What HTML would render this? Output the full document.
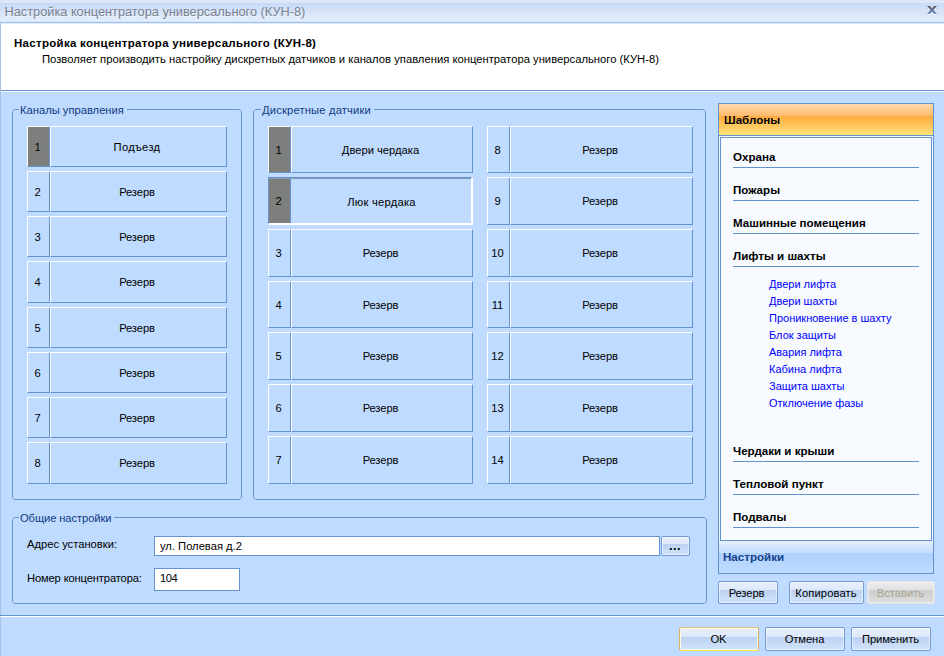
<!DOCTYPE html>
<html lang="ru"><head><meta charset="utf-8"><title>Настройка концентратора универсального (КУН-8)</title>
<style>
html,body{margin:0;padding:0}
body{width:944px;height:656px;overflow:hidden;background:#bfdbff;position:relative;font-family:"Liberation Sans",sans-serif;font-size:11.2px;color:#000;line-height:13px}
div,span{position:absolute;box-sizing:border-box;white-space:nowrap}
.tb{left:0;top:0;width:944px;height:24px;background:linear-gradient(#dde7f9 0,#dde7f9 3px,#c4d5f0 3px,#c9dbf7 4px,#e6edfb 21px,#c8e8fc 21px,#c8e8fc 22px,#a9c4ee 22px,#a9c4ee 23px,#dfe8f8 23px,#dfe8f8 24px)}
.tt{left:4.5px;top:4px;font-size:12.78px;line-height:15px;color:#76808e;text-shadow:0 1px 0 rgba(255,255,255,.6)}
.hd{left:1px;top:24px;width:943px;height:66px;background:#fff}
.hl{left:0;top:90px;width:944px;height:2px;background:linear-gradient(#6593cf 1px,#f4f8ff 1px)}
.lb{left:0;top:23px;width:1px;height:633px;background:#aebfe6}
.h1{left:14px;top:36px;font-weight:bold;font-size:11.5px;letter-spacing:.29px;line-height:14px}
.h2{left:42px;top:53px;font-size:11.25px}
.lg{color:#103a82;background:#bfdbff;padding:0 3px 0 1px;line-height:13px}
.c{padding-right:3px;border-top:1px solid #fff;border-left:1px solid #fff;border-right:1px solid #6593cf;border-bottom:1px solid #6593cf;text-align:center}
.c.g{background:#7d7f7c}
.r{letter-spacing:-.1px}
.w{letter-spacing:.3px}
.s{border-top:1px solid #6593cf;border-left:1px solid #6593cf;border-right:2px solid #fff;border-bottom:2px solid #fff;text-align:center}
.tx{background:#fff;border:1px solid #6593cf;padding-left:5px}
.btn{border:1px solid #7499d4;border-radius:2px;text-align:center;padding-right:1px;background:linear-gradient(#e9f0fc 0,#dde8fa 40%,#bcd1f1 40%,#d1e4fc 100%);box-shadow:inset 0 0 0 1px rgba(255,255,255,.5)}
.btn.def{border-color:#e3c17a #d9ad62 #ffe34d #d9ad62;box-shadow:inset 0 0 0 1px #fffbe6}
.btn.dis{border-color:#e3e3e1;color:#a9a791;background:linear-gradient(#ececec 0,#e1e1e1 40%,#cecece 40%,#dddddd 100%)}
.pn{left:718px;top:103px;width:216px;height:471px;border:1px solid #6593cf}
.ph{left:0;top:0;width:214px;height:31px;background:linear-gradient(#ffd9aa 0,#ffbb6e 12px,#ffab3f 12px,#fee17a 31px)}
.pl{left:1px;top:33px;width:212px;height:404px;background:#f7faff;border:1px solid #6593cf;box-shadow:0 0 0 1px #f4f8ff}
.pf{left:0;top:437px;width:214px;height:32px;background:linear-gradient(#e3efff 0,#c4ddff 12px,#add1ff 12px,#c0dbff 32px)}
.b{font-weight:bold;font-size:11.6px}
.it{left:13px;width:186px;height:1px;background:#6593cf}
.lk{left:49px;color:#0000ff;font-size:11px}
</style></head><body>

<div class="tb"></div><div class="tt">Настройка концентратора универсального (КУН-8)</div>
<svg style="position:absolute;left:926px;top:5px" width="12" height="11" viewBox="0 0 12 11"><defs><linearGradient id="xg" x1="0" y1="0" x2="0" y2="1"><stop offset="0" stop-color="#55585e"/><stop offset="1" stop-color="#7194d0"/></linearGradient></defs><path d="M1 2H4L6 4.4 8 2H11L7.5 6 11 10H8L6 7.6 4 10H1L4.5 6Z" fill="#fff" opacity=".85"/><path d="M1 1H4L6 3.4 8 1H11L7.5 5 11 9H8L6 6.6 4 9H1L4.5 5Z" fill="url(#xg)"/></svg>
<div class="hd"></div><div class="hl"></div><div class="lb"></div>
<div class="h1">Настройка концентратора универсального (КУН-8)</div>
<div class="h2">Позволяет производить настройку дискретных датчиков и каналов упавления концентратора универсального (КУН-8)</div>
<svg style="position:absolute;left:0;top:0" width="944" height="656"><g fill="none" stroke="#6593cf" stroke-width="1">
<path d="M12.5 497.5L12.5 111.5L14.5 109.5L239.5 109.5L241.5 111.5L241.5 497.5L239.5 499.5L14.5 499.5Z"/><path d="M253.5 497.5L253.5 111.5L255.5 109.5L703.5 109.5L705.5 111.5L705.5 497.5L703.5 499.5L255.5 499.5Z"/><path d="M12.5 601.5L12.5 519.5L14.5 517.5L704.5 517.5L706.5 519.5L706.5 601.5L704.5 603.5L14.5 603.5Z"/>
</g></svg>
<div class="lg" style="left:19px;top:104px">Каналы управления</div>
<div class="lg" style="left:261px;top:104px;letter-spacing:.17px">Дискретные датчики</div>
<div class="lg" style="left:19px;top:512px;letter-spacing:-.1px">Общие настройки</div>
<div class="c g" style="left:27px;top:126px;width:23px;height:41px;line-height:41px;padding-right:2px">1</div>
<div class="c w" style="left:50px;top:126px;width:177px;height:41px;line-height:41px">Подъезд</div>
<div class="c" style="left:27px;top:171px;width:23px;height:41px;line-height:41px;padding-right:2px">2</div>
<div class="c r" style="left:50px;top:171px;width:177px;height:41px;line-height:41px">Резерв</div>
<div class="c" style="left:27px;top:216px;width:23px;height:41px;line-height:41px;padding-right:2px">3</div>
<div class="c r" style="left:50px;top:216px;width:177px;height:41px;line-height:41px">Резерв</div>
<div class="c" style="left:27px;top:261px;width:23px;height:42px;line-height:41px;padding-right:2px">4</div>
<div class="c r" style="left:50px;top:261px;width:177px;height:42px;line-height:41px">Резерв</div>
<div class="c" style="left:27px;top:307px;width:23px;height:41px;line-height:41px;padding-right:2px">5</div>
<div class="c r" style="left:50px;top:307px;width:177px;height:41px;line-height:41px">Резерв</div>
<div class="c" style="left:27px;top:352px;width:23px;height:41px;line-height:41px;padding-right:2px">6</div>
<div class="c r" style="left:50px;top:352px;width:177px;height:41px;line-height:41px">Резерв</div>
<div class="c" style="left:27px;top:397px;width:23px;height:41px;line-height:41px;padding-right:2px">7</div>
<div class="c r" style="left:50px;top:397px;width:177px;height:41px;line-height:41px">Резерв</div>
<div class="c" style="left:27px;top:442px;width:23px;height:42px;line-height:41px;padding-right:2px">8</div>
<div class="c r" style="left:50px;top:442px;width:177px;height:42px;line-height:41px">Резерв</div>
<div class="c g" style="left:268px;top:126px;width:23px;height:47px;line-height:47px;padding-right:2px">1</div>
<div class="c" style="left:291px;top:126px;width:182px;height:47px;line-height:47px">Двери чердака</div>
<div class="c" style="left:487px;top:126px;width:23px;height:47px;line-height:47px;padding-right:2px">8</div>
<div class="c r" style="left:510px;top:126px;width:183px;height:47px;line-height:47px">Резерв</div>
<div class="s" style="left:268px;top:177px;width:205px;height:48px"></div>
<div style="left:269px;top:178px;width:22px;height:45px;background:#7d7f7c;border-right:1px solid #6593cf;border-top:1px solid #8d9bb5;line-height:45px;padding-right:2px;text-align:center">2</div>
<div style="left:291px;top:178px;width:180px;height:45px;border-top:1px solid #8d9bb5;line-height:47px;padding-left:1px;letter-spacing:.25px;text-align:center">Люк чердака</div>
<div class="c" style="left:487px;top:177px;width:23px;height:48px;line-height:47px;padding-right:2px">9</div>
<div class="c r" style="left:510px;top:177px;width:183px;height:48px;line-height:47px">Резерв</div>
<div class="c" style="left:268px;top:229px;width:23px;height:48px;line-height:47px;padding-right:2px">3</div>
<div class="c r" style="left:291px;top:229px;width:182px;height:48px;line-height:47px">Резерв</div>
<div class="c" style="left:487px;top:229px;width:23px;height:48px;line-height:47px;padding-right:2px">10</div>
<div class="c r" style="left:510px;top:229px;width:183px;height:48px;line-height:47px">Резерв</div>
<div class="c" style="left:268px;top:281px;width:23px;height:47px;line-height:47px;padding-right:2px">4</div>
<div class="c r" style="left:291px;top:281px;width:182px;height:47px;line-height:47px">Резерв</div>
<div class="c" style="left:487px;top:281px;width:23px;height:47px;line-height:47px;padding-right:2px">11</div>
<div class="c r" style="left:510px;top:281px;width:183px;height:47px;line-height:47px">Резерв</div>
<div class="c" style="left:268px;top:332px;width:23px;height:48px;line-height:47px;padding-right:2px">5</div>
<div class="c r" style="left:291px;top:332px;width:182px;height:48px;line-height:47px">Резерв</div>
<div class="c" style="left:487px;top:332px;width:23px;height:48px;line-height:47px;padding-right:2px">12</div>
<div class="c r" style="left:510px;top:332px;width:183px;height:48px;line-height:47px">Резерв</div>
<div class="c" style="left:268px;top:384px;width:23px;height:48px;line-height:47px;padding-right:2px">6</div>
<div class="c r" style="left:291px;top:384px;width:182px;height:48px;line-height:47px">Резерв</div>
<div class="c" style="left:487px;top:384px;width:23px;height:48px;line-height:47px;padding-right:2px">13</div>
<div class="c r" style="left:510px;top:384px;width:183px;height:48px;line-height:47px">Резерв</div>
<div class="c" style="left:268px;top:436px;width:23px;height:48px;line-height:47px;padding-right:2px">7</div>
<div class="c r" style="left:291px;top:436px;width:182px;height:48px;line-height:47px">Резерв</div>
<div class="c" style="left:487px;top:436px;width:23px;height:48px;line-height:47px;padding-right:2px">14</div>
<div class="c r" style="left:510px;top:436px;width:183px;height:48px;line-height:47px">Резерв</div>
<div style="left:27px;top:538px">Адрес установки:</div>
<div class="tx" style="left:154px;top:536px;width:506px;height:20px;line-height:18px">ул. Полевая д.2</div>
<div class="btn" style="left:661px;top:536px;width:29px;height:20px;line-height:18px;font-weight:bold;font-size:13px;letter-spacing:.4px;padding:0 1px 0 0">...</div>
<div style="left:27px;top:572px;letter-spacing:-.15px">Номер концентратора:</div>
<div class="tx" style="left:154px;top:568px;width:86px;height:23px;line-height:19px;letter-spacing:-.5px">104</div>
<div class="pn"><div class="ph"></div><div style="left:0;top:31px;width:214px;height:1px;background:#6593cf"></div><div class="pl"></div><div class="pf"></div>
<div class="b" style="left:5px;top:9px">Шаблоны</div>
<div class="b" style="left:4px;top:446px;color:#15428b">Настройки</div>
<div class="b" style="left:14px;top:46px">Охрана</div><div class="it" style="left:14px;top:63px"></div>
<div class="b" style="left:14px;top:79px">Пожары</div><div class="it" style="left:14px;top:96px"></div>
<div class="b" style="left:14px;top:112px">Машинные помещения</div><div class="it" style="left:14px;top:129px"></div>
<div class="b" style="left:14px;top:145px">Лифты и шахты</div><div class="it" style="left:14px;top:162px"></div>
<div class="b" style="left:14px;top:340px">Чердаки и крыши</div><div class="it" style="left:14px;top:357px"></div>
<div class="b" style="left:14px;top:373px">Тепловой пункт</div><div class="it" style="left:14px;top:390px"></div>
<div class="b" style="left:14px;top:406px">Подвалы</div><div class="it" style="left:14px;top:423px"></div>
<div class="lk" style="left:50px;top:174px">Двери лифта</div>
<div class="lk" style="left:50px;top:191px">Двери шахты</div>
<div class="lk" style="left:50px;top:208px">Проникновение в шахту</div>
<div class="lk" style="left:50px;top:225px">Блок защиты</div>
<div class="lk" style="left:50px;top:242px">Авария лифта</div>
<div class="lk" style="left:50px;top:259px">Кабина лифта</div>
<div class="lk" style="left:50px;top:276px">Защита шахты</div>
<div class="lk" style="left:50px;top:293px">Отключение фазы</div>
</div>
<div class="btn r" style="left:718px;top:581px;width:60px;height:23px;line-height:23px;padding-right:3px">Резерв</div>
<div class="btn" style="left:789px;top:581px;width:75px;height:23px;line-height:23px;letter-spacing:.12px">Копировать</div>
<div class="btn dis" style="left:867px;top:581px;width:68px;height:23px;line-height:23px">Вставить</div>
<div style="left:0;top:615px;width:944px;height:1px;background:#6593cf"></div><div style="left:0;top:616px;width:944px;height:1px;background:#fff"></div>
<div class="btn def" style="left:679px;top:627px;width:80px;height:24px;line-height:23px">OK</div>
<div class="btn r" style="left:765px;top:627px;width:80px;height:24px;line-height:23px">Отмена</div>
<div class="btn r" style="left:851px;top:627px;width:80px;height:24px;line-height:23px">Применить</div>
</body></html>
